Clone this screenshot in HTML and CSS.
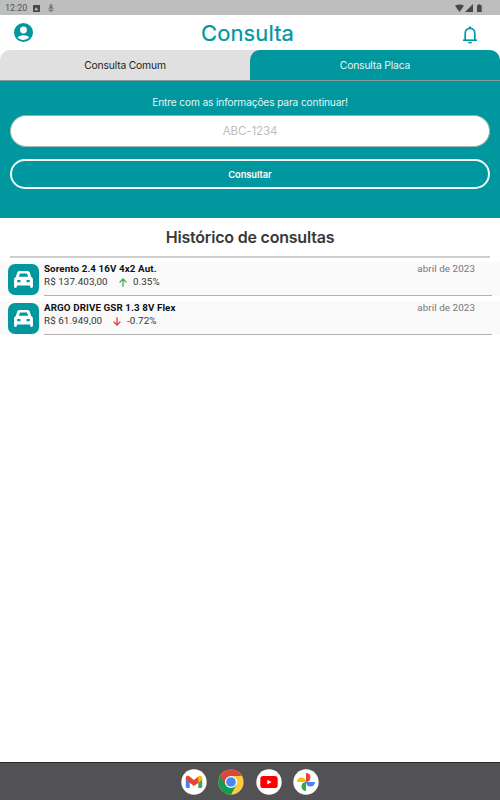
FILE: index.html
```html
<!DOCTYPE html>
<html lang="pt-BR">
<head>
<meta charset="utf-8">
<title>Consulta</title>
<link rel="stylesheet" href="styles.css">
</head>
<body>
<div class="status">
  <span class="clock">12:20</span>
  <svg class="s-app" viewBox="0 0 7 7"><rect width="7" height="7" rx=".6" fill="#484848"/><path d="M1.400 5.300 3 2.200 4.200 3.800 5.500 5.300z" fill="#bebebe"/></svg>
  <svg class="s-bug" viewBox="0 0 6 8" fill="none" stroke="#555" stroke-width=".8"><circle cx="3" cy="1.800" r="1.200"/><path d="M3 3v4M.5 4.400 3 3.500l2.500.9M1 5.500Q1 7.200 3 7.200T5 5.500"/></svg>
  <svg class="s-right" viewBox="0 0 28 9" fill="#484848"><path d="M0 1.800Q4.500-1 9 1.800L4.500 8z"/><path d="M18 0v8h-8z"/><path d="M22 1.200h1.300V.3h2v.9h1.400V8H22z"/></svg>
</div>
<header class="top">
  <svg class="user" viewBox="2 2 20 20" fill="#00979f"><path d="M12 2a10 10 0 1 0 0 20 10 10 0 0 0 0-20zm0 3.800a3.600 3.600 0 1 1 0 7.200 3.600 3.600 0 0 1 0-7.200zm0 14.200c-2.500 0-4.700-1-6.200-2.900C7.300 15.800 9.700 14.900 12 14.900s4.700.9 6.200 2.200A8 8 0 0 1 12 20z"/></svg>
  <h1>Consulta</h1>
  <svg class="bell" viewBox="0 0 16 18" fill="none" stroke="#00979f"><path d="M3.200 14V7.500C3.200 4.500 5 2.500 8 2.500s4.800 2 4.800 5V14" stroke-width="1.700"/><path d="M1 14.200h14" stroke-width="1.600"/><path d="M8 .5v2" stroke-width="2.400"/><path d="M6.200 16.600h3.600" stroke-width="1.500"/></svg>
</header>
<nav class="tabs">
  <div class="tab common">Consulta Comum</div>
  <div class="tab plate">Consulta Placa</div>
</nav>
<section class="search">
  <p>Entre com as informações para continuar!</p>
  <div class="field">ABC-1234</div>
  <div class="button">Consultar</div>
</section>
<main>
  <h2>Histórico de consultas</h2>
  <div class="row">
    <div class="car"><svg viewBox="0 0 20 18"><path fill="#fff" fill-rule="evenodd" d="M6 0h8c1.500 0 2.400.8 2.800 2l1.300 4.300c1.200.5 1.900 1.500 1.900 2.900V16.500c0 .8-.6 1.500-1.500 1.500S17 17.300 17 16.500V15.300H3v1.200C3 17.300 2.400 18 1.500 18S0 17.300 0 16.500V9.200c0-1.400.7-2.400 1.900-2.900L3.200 2C3.600.8 4.500 0 6 0zM6.200 2.700 5.100 6h9.800l-1.100-3.300zM3.400 9.500v2.400h3.400V9.500zM13.200 9.500v2.400h3.400V9.500z"/></svg></div>
    <div class="info">
      <div class="line"><b class="n1">Sorento 2.4 16V 4x2 Aut.</b><span class="date">abril de 2023</span></div>
      <div class="price"><span class="p1">R$ 137.403,00</span><svg class="arrow" viewBox="0 0 8 9" fill="none" stroke="#43ad4b" stroke-width="1.300"><path d="M4 8.700V1M.6 4.400 4 1l3.400 3.400"/></svg><span class="c1">0.35%</span></div>
    </div>
  </div>
  <div class="row">
    <div class="car"><svg viewBox="0 0 20 18"><path fill="#fff" fill-rule="evenodd" d="M6 0h8c1.500 0 2.400.8 2.800 2l1.300 4.300c1.200.5 1.900 1.500 1.900 2.900V16.500c0 .8-.6 1.500-1.500 1.500S17 17.300 17 16.500V15.300H3v1.200C3 17.300 2.400 18 1.500 18S0 17.300 0 16.500V9.200c0-1.400.7-2.400 1.900-2.900L3.200 2C3.600.8 4.500 0 6 0zM6.200 2.700 5.100 6h9.800l-1.100-3.300zM3.400 9.500v2.400h3.400V9.500zM13.200 9.500v2.400h3.400V9.500z"/></svg></div>
    <div class="info">
      <div class="line"><b class="n2">ARGO DRIVE GSR 1.3 8V Flex</b><span class="date">abril de 2023</span></div>
      <div class="price"><span class="p2">R$ 61.949,00</span><svg class="arrow" viewBox="0 0 8 9" fill="none" stroke="#e63a2e" stroke-width="1.300"><path d="M4 .3V8M.6 4.600 4 8l3.400-3.400"/></svg><span class="c1">-0.72%</span></div>
    </div>
  </div>
</main>
<footer class="dock">
  <svg viewBox="0 0 26 26"><circle cx="13" cy="13" r="12.700" fill="#fff"/><path d="M4.800 9v8.700c0 .7.500 1.200 1.200 1.200h2.700v-8z" fill="#4285f4"/><path d="M17.300 10.900v8H20c.7 0 1.200-.5 1.200-1.200V9z" fill="#34a853"/><path d="M4.800 8.500C5 6.800 7 6.300 8.200 7.300L13 11l4.800-3.700v6.300L13 17l-8.200-6.200z" fill="#ea4335"/><path d="M21.200 10.800V9c0-2-2-2.800-3.400-1.700l-.5.400v6z" fill="#fbbc04"/></svg>
  <svg viewBox="0 0 26 26"><circle cx="13" cy="13" r="12.600" fill="#fbcb43"/><path d="M13 13 2.100 6.700A12.600 12.600 0 0 0 13 25.600l5.400-9.500z" fill="#159a55"/><path d="M13 13 7.600 16.100 2.100 6.700A12.600 12.600 0 0 1 23.900 6.900H13z" fill="#d8483b"/><circle cx="13" cy="13" r="6.100" fill="#fff"/><circle cx="13" cy="13" r="4.800" fill="#4688f4"/></svg>
  <svg viewBox="0 0 26 26"><circle cx="13" cy="13" r="12.700" fill="#fff"/><rect x="4.300" y="7.100" width="17.400" height="12" rx="2.800" fill="#f00"/><path d="m11.300 10.700 4.200 2.400-4.200 2.400z" fill="#fff"/></svg>
  <svg viewBox="0 0 26 26"><circle cx="13" cy="13" r="12.700" fill="#fff"/><path d="M13 4a4.500 4.500 0 0 1 0 9z" fill="#ea4335"/><path d="M22 13a4.500 4.500 0 0 1-9 0z" fill="#4285f4"/><path d="M13 22a4.500 4.500 0 0 1 0-9z" fill="#34a853"/><path d="M4 13a4.500 4.500 0 0 1 9 0z" fill="#fbbc04"/></svg>
</footer>
</body>
</html>
```
FILE: styles.css
```css
* { box-sizing: border-box; }
body { margin: 0; height: 800px; display: flex; flex-direction: column; background: #fff; font-family: Inter, "Liberation Sans", sans-serif; color: #222; white-space: nowrap; overflow: hidden; }
svg { display: block; flex: none; }
h1, h2, p { margin: 0; font-weight: 400; }
.status { height: 15px; background: #bebebe; display: flex; align-items: center; padding: 1px 17px 0 5px; font: 9px/14px Roboto, sans-serif; color: #555; }
.clock { width: 28px; }
.s-app { width: 7px; height: 7px; }
.s-bug { width: 6px; height: 8px; margin-left: 8px; }
.s-right { width: 28px; height: 9px; margin-left: auto; }
.top { height: 35px; display: flex; align-items: center; justify-content: space-between; padding: 0 22px 0 14px; }
.user { width: 19px; height: 19px; }
.bell { width: 16px; height: 18px; margin-top: 4px; }
h1 { font-size: 22px; line-height: 35px; letter-spacing: .1px; color: #00979f; margin-top: 2px; -webkit-text-stroke: .2px #00979f; }
.tabs { display: flex; height: 31px; background: linear-gradient(90deg, #fff 50%, #e0e0e0 50%, #e0e0e0 75%, #fff 75%); border-bottom: 1px solid #819a9b; }
.tab { flex: 1; font-size: 10.300px; letter-spacing: -.17px; line-height: 31px; text-align: center; }
.common { background: #e0e0e0; border-top-left-radius: 10px; }
.plate { background: #00979f; color: #e5f5f5; border-top-right-radius: 10px; border-top-left-radius: 10px; }
.search { background: #00979f; height: 137px; padding: 15px 10px 0; text-align: center; color: #e5f5f5; }
.search p { font-size: 10.200px; letter-spacing: -.14px; line-height: 12px; height: 19px; }
.field { height: 32px; border-radius: 16px; background: #fff; border: 1px solid #a8b5b5; border-top-color: #7cb9bc; color: #bdbdbd; font-size: 11.500px; letter-spacing: -.1px; line-height: 31px; }
.button { height: 30px; margin-top: 12px; border: 2px solid #f0fafa; border-radius: 15px; color: #fff; font-size: 9.300px; letter-spacing: -.04px; font-weight: 600; line-height: 28px; }
main { flex: 1; }
h2 { font-size: 16px; letter-spacing: -.2px; font-weight: 600; line-height: 38px; height: 40px; margin: 0 10px 4px; text-align: center; color: #383838; border-bottom: 2px solid #cfcfcf; }
.row { display: flex; height: 34px; margin-bottom: 5px; padding: 1px 8px 0; background: #fafafa; gap: 5px; }
.car { width: 31px; height: 31px; margin-top: 1px; border-radius: 7px; background: #00979f; display: flex; align-items: center; justify-content: center; }
.car svg { width: 19px; height: 17px; }
.info { flex: 1; height: 33px; border-bottom: 1px solid #b3b3b3; }
.line, .price { display: flex; height: 13px; line-height: 12px; font-family: Roboto, sans-serif; font-size: 9.800px; letter-spacing: .09px; color: #333; }
.line { justify-content: space-between; padding-right: 17px; }
.line b { font-weight: 700; color: #111; }
.line .date { color: #757575; }
.price { align-items: center; height: 12px; }
.arrow { width: 8px; height: 9px; }
.p1 { width: 75px; }
.p2 { width: 69px; }
.c1 { margin-left: 6px; }
.dock { height: 38px; background: #525254; border-top: 1px solid #29292b; display: flex; align-items: center; justify-content: center; gap: 11.500px; }
.dock svg { width: 26px; height: 26px; }
```
